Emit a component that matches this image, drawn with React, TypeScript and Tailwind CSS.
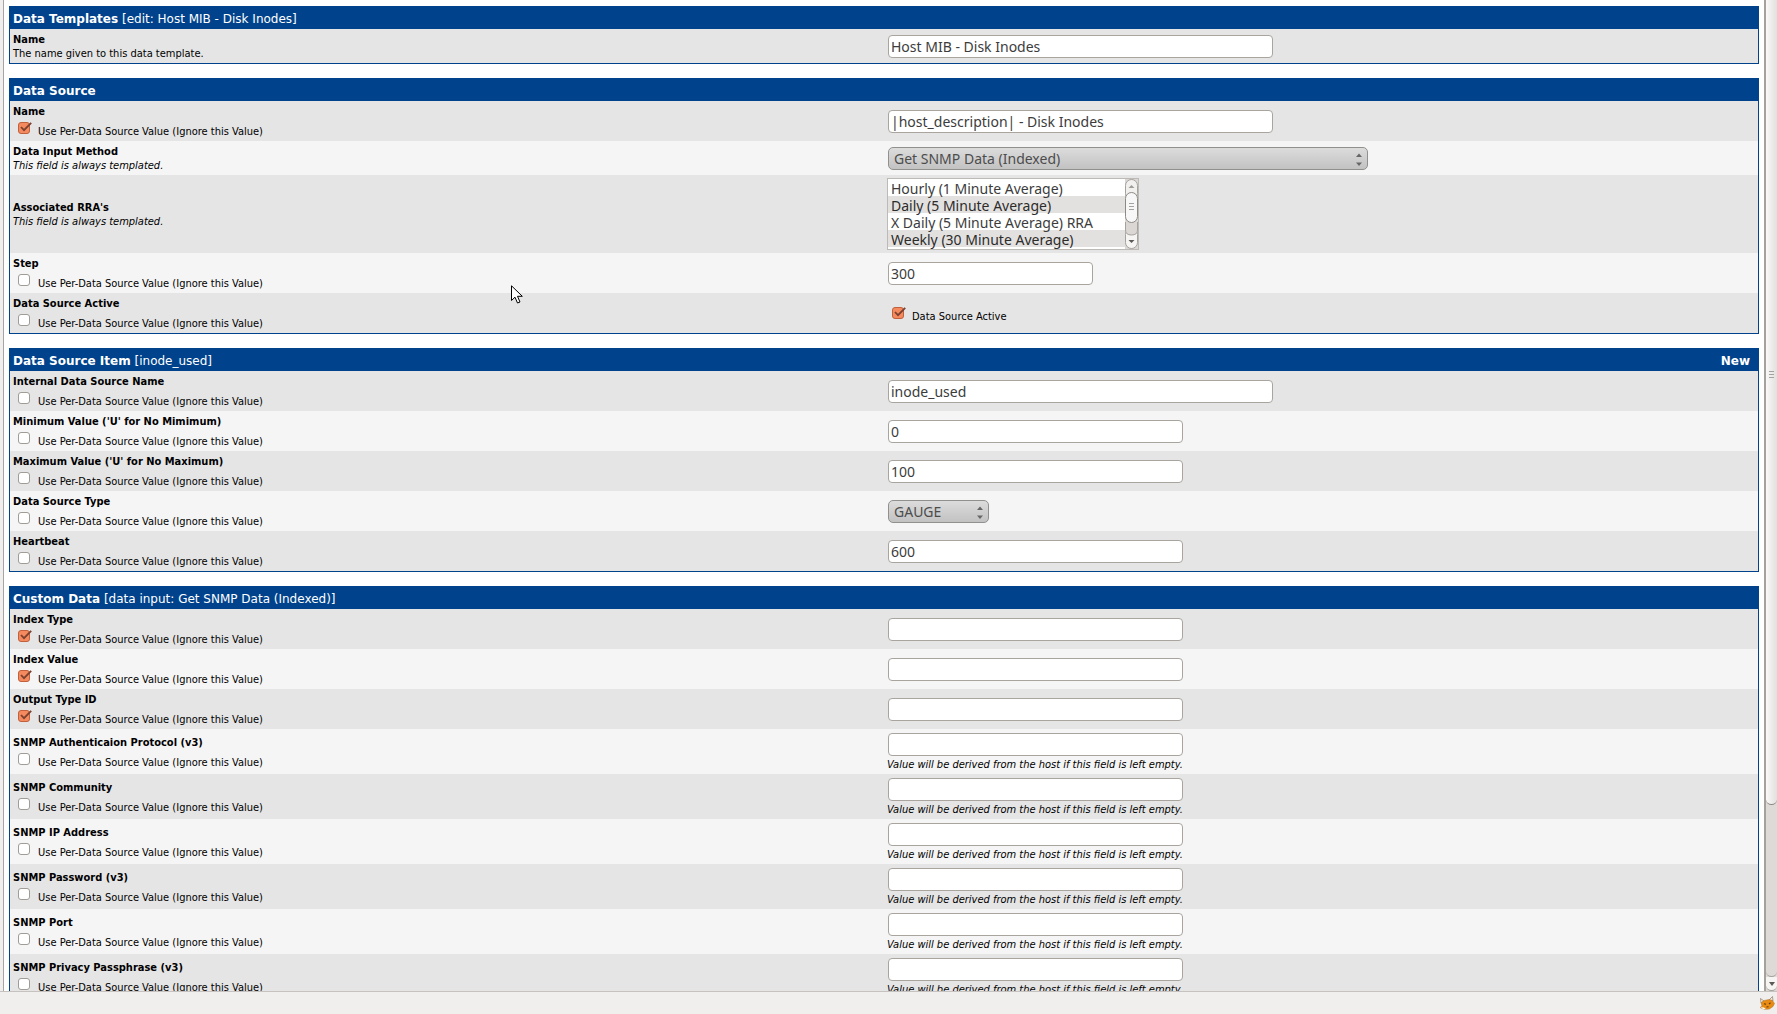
import { useId, type ReactNode } from "react";

const uiFont = "font-['DejaVu_Sans_Condensed','DejaVu_Sans',sans-serif]";
const fieldFont = "font-['Noto_Sans','Open_Sans',sans-serif]";

const widths = {
  sm: "w-[205px]",
  md: "w-[295px]",
  lg: "w-[385px]",
};

interface CheckboxProps {
  id: string;
  checked?: boolean;
}

function Checkbox({ id, checked }: CheckboxProps) {
  return (
    <span className="relative size-3 shrink-0">
      <input
        id={id}
        type="checkbox"
        defaultChecked={checked}
        className="peer block size-3 appearance-none rounded-[3px] border border-[#a09c97] bg-white checked:border-[#c0603c] checked:bg-[#f58a5e]"
      />
      <svg
        viewBox="0 0 14 12"
        className="pointer-events-none absolute top-0 left-0 hidden h-3 w-[14px] peer-checked:block"
        fill="none"
        stroke="#7a4030"
        strokeWidth="1.8"
      >
        <path d="M3 5 L6 8.200 L13.200 0.8" />
      </svg>
    </span>
  );
}

interface RowProps {
  name: string;
  shaded: boolean;
  note?: ReactNode;
  perSource?: boolean;
  hint?: string;
  children: (id: string) => ReactNode;
}

function Row({ name, shaded, note, perSource, hint, children }: RowProps) {
  const id = useId();
  return (
    <div className={`grid grid-cols-2 items-center ${shaded ? "bg-[#e5e5e5]" : "bg-[#f5f5f5]"}`}>
      <div className="px-[3px] pt-1 pb-[2px]">
        <label htmlFor={id} className="block font-bold">
          {name}
        </label>
        {note}
        {perSource !== undefined && (
          <div className="flex gap-2 pt-[3px] pl-[5px]">
            <Checkbox id={`${id}-per`} checked={perSource} />
            <label htmlFor={`${id}-per`} className="pt-[3px]">
              Use Per-Data Source Value (Ignore this Value)
            </label>
          </div>
        )}
      </div>
      <div className="px-[3px] pt-[3px] pb-[2px]">
        {children(id)}
        {hint && <p className="pt-px italic">{hint}</p>}
      </div>
    </div>
  );
}

interface TextFieldProps {
  id: string;
  size: keyof typeof widths;
  value?: string;
}

function TextField({ id, size, value = "" }: TextFieldProps) {
  return (
    <input
      id={id}
      type="text"
      defaultValue={value}
      className={`m-px block h-[23px] rounded-[4px] border border-[#a9a49e] bg-white px-[2px] text-sm text-[#3c3c3c] ${widths[size]} ${fieldFont}`}
    />
  );
}

function Dropdown({ id, value, width }: { id: string; value: string; width: string }) {
  return (
    <div className={`relative m-px ${width}`}>
      <select
        id={id}
        disabled
        className={`block h-[23px] w-full appearance-none rounded-[5px] border border-[#92908d] bg-linear-to-b from-[#dcdcdc] to-[#c2c2c2] pt-px pl-[5px] text-sm text-[#4c4c4c] opacity-100 ${fieldFont}`}
      >
        <option>{value}</option>
      </select>
      <svg viewBox="0 0 6 13" className="pointer-events-none absolute top-[6px] right-[6px] h-[13px] w-[6px]" fill="#666">
        <path d="M0 4 L3 0.5 L6 4 Z M0 9.5 L3 13 L6 9.5 Z" />
      </svg>
    </div>
  );
}

const rras = [
  { label: "Hourly (1 Minute Average)", selected: false },
  { label: "Daily (5 Minute Average)", selected: true },
  { label: "X Daily (5 Minute Average) RRA", selected: false },
  { label: "Weekly (30 Minute Average)", selected: true },
];

function RraList({ id }: { id: string }) {
  return (
    <div className="relative mb-px w-[252px]">
      <select
        id={id}
        multiple
        size={4}
        defaultValue={rras.filter((r) => r.selected).map((r) => r.label)}
        className={`block h-[72px] w-full overflow-hidden border border-[#bdb9b5] bg-white p-0 text-sm leading-[17px] text-[#3c3c3c] [scrollbar-width:none] ${fieldFont}`}
      >
        {rras.map((r) => (
          <option
            key={r.label}
            className="h-[17px] min-h-0 px-[3px] py-0 text-[#3c3c3c] checked:bg-[#e3e1df] checked:text-[#2c2c2c]"
          >
            {r.label}
          </option>
        ))}
      </select>
      <svg viewBox="0 0 13 70" className="absolute top-px right-px h-[70px] w-[13px]" stroke="#a5a19d">
        <rect width="13" height="70" fill="#dad7d5" stroke="none" />
        <rect x="0.5" y="0.5" width="12" height="20" rx="6" fill="#f1f0ef" />
        <rect x="0.5" y="49.5" width="12" height="20" rx="6" fill="#f6f5f4" />
        <path d="M0.5 43 V51 Q0.5 56 6.5 56 Q12.500 56 12.500 51 V43" fill="#dad7d5" />
        <rect x="0.5" y="13.500" width="12" height="30" rx="6" fill="#f8f7f7" stroke="#8d8985" />
        <path d="M4 24.500 H9 M4 27.500 H9 M4 30.500 H9" />
        <path d="M3.500 9 L6.500 6 L9.500 9 Z" fill="#a09c98" stroke="none" />
        <path d="M3.500 61 L6.500 64 L9.500 61 Z" fill="#5c5957" stroke="none" />
      </svg>
    </div>
  );
}

interface PanelProps {
  title: string;
  detail?: string;
  action?: string;
  children: ReactNode;
}

function Panel({ title, detail, action, children }: PanelProps) {
  return (
    <section className="border border-[#00438c]">
      <header className="flex h-[22px] items-center justify-between bg-[#00438c] pt-[2px] pr-2 pl-[3px] font-['DejaVu_Sans',sans-serif] text-xs text-white">
        <h2>
          <strong>{title}</strong> {detail && <span>[{detail}]</span>}
        </h2>
        {action && (
          <a href="#new" className="font-bold">
            {action}
          </a>
        )}
      </header>
      {children}
    </section>
  );
}

const itemFields = [
  { name: "Internal Data Source Name", value: "inode_used", size: "lg" },
  { name: "Minimum Value ('U' for No Mimimum)", value: "0", size: "md" },
  { name: "Maximum Value ('U' for No Maximum)", value: "100", size: "md" },
  { name: "Data Source Type", value: "GAUGE", size: null },
  { name: "Heartbeat", value: "600", size: "md" },
] as const;

const customFields = [
  { name: "Index Type", perSource: true },
  { name: "Index Value", perSource: true },
  { name: "Output Type ID", perSource: true },
  { name: "SNMP Authenticaion Protocol (v3)", perSource: false },
  { name: "SNMP Community", perSource: false },
  { name: "SNMP IP Address", perSource: false },
  { name: "SNMP Password (v3)", perSource: false },
  { name: "SNMP Port", perSource: false },
  { name: "SNMP Privacy Passphrase (v3)", perSource: false },
];

const templated = <p className="italic">This field is always templated.</p>;

function WindowScrollbar() {
  return (
    <div className="flex w-[13px] shrink-0 flex-col border-l-2 border-[#a5a19d] bg-[#dedad8]">
      <div className="flex flex-[748] items-center justify-center rounded-b-full border-b border-[#8d8985] bg-linear-to-r from-[#faf9f9] to-[#e2e0de] pb-14">
        <svg viewBox="0 0 5 7" className="h-[7px] w-[5px]" stroke="#a5a19d">
          <path d="M0 0.5 H5 M0 3.500 H5 M0 6.500 H5" />
        </svg>
      </div>
      <div className="flex-[171] rounded-b-full border-b border-[#a5a19d]" />
      <button
        type="button"
        aria-label="Scroll down"
        className="flex h-[14px] items-center justify-center rounded-b-full border-b border-[#a5a19d] bg-[#f6f5f4]"
      >
        <svg viewBox="0 0 6 4" className="h-1 w-[6px]" fill="#5c5957">
          <path d="M0 0 H6 L3 4 Z" />
        </svg>
      </button>
    </div>
  );
}

export default function App() {
  return (
    <div className={`flex h-screen flex-col bg-[#f1efed] text-[11px] leading-[14px] text-black ${uiFont}`}>
      <div className="flex min-h-0 flex-1 border-b border-[#c5c2bf] pl-[3px]">
        <main className="flex flex-1 flex-col gap-[14px] overflow-y-auto border-l border-[#a5a5a5] bg-white pt-[6px] pr-[5px] pl-[5px] [scrollbar-width:none]">
          <Panel title="Data Templates" detail="edit: Host MIB - Disk Inodes">
            <Row name="Name" shaded note={<p>The name given to this data template.</p>}>
              {(id) => <TextField id={id} size="lg" value="Host MIB - Disk Inodes" />}
            </Row>
          </Panel>

          <Panel title="Data Source">
            <Row name="Name" shaded perSource>
              {(id) => <TextField id={id} size="lg" value="|host_description| - Disk Inodes" />}
            </Row>
            <Row name="Data Input Method" shaded={false} note={templated}>
              {(id) => <Dropdown id={id} value="Get SNMP Data (Indexed)" width="w-[480px]" />}
            </Row>
            <Row name="Associated RRA's" shaded note={templated}>
              {(id) => <RraList id={id} />}
            </Row>
            <Row name="Step" shaded={false} perSource={false}>
              {(id) => <TextField id={id} size="sm" value="300" />}
            </Row>
            <Row name="Data Source Active" shaded perSource={false}>
              {(id) => (
                <div className="flex gap-2 pt-1 pl-[5px]">
                  <Checkbox id={id} checked />
                  <label htmlFor={id} className="pt-[3px]">
                    Data Source Active
                  </label>
                </div>
              )}
            </Row>
          </Panel>

          <Panel title="Data Source Item" detail="inode_used" action="New">
            {itemFields.map((field, i) => (
              <Row key={field.name} name={field.name} shaded={i % 2 === 0} perSource={false}>
                {(id) =>
                  field.size ? (
                    <TextField id={id} size={field.size} value={field.value} />
                  ) : (
                    <Dropdown id={id} value={field.value} width="w-[101px]" />
                  )
                }
              </Row>
            ))}
          </Panel>

          <Panel title="Custom Data" detail="data input: Get SNMP Data (Indexed)">
            {customFields.map((field, i) => (
              <Row
                key={field.name}
                name={field.name}
                shaded={i % 2 === 0}
                perSource={field.perSource}
                hint={field.perSource ? undefined : "Value will be derived from the host if this field is left empty."}
              >
                {(id) => <TextField id={id} size="md" />}
              </Row>
            ))}
          </Panel>
        </main>
        <WindowScrollbar />
      </div>

      <footer className="flex h-[22px] shrink-0 items-center justify-end pr-[2px]">
        <svg viewBox="0 0 16 15" className="h-[15px] w-4">
          <path d="M2 7 L1.500 2.500 L5 5 Z M10 4 L13.500 0.5 L14 5 Z" fill="#f7ead8" stroke="#8a7a68" strokeWidth="0.7" />
          <path d="M2 7 L5 4.500 L10 3.500 L13.500 4.500 L15.500 7.500 L14 10.500 L10.500 13 L5.500 13.500 L1 11.500 L3 10 Z" fill="#e98a12" stroke="#a8763a" strokeWidth="0.5" />
          <path d="M1.500 11.300 L5 11.500 L7 13.300 L4.500 13.300 Z" fill="#fff" />
          <path d="M5 7.800 L7 8.200 M10 8 L11.500 6.800 M7.500 11 L9.500 10.800" stroke="#5a3a10" strokeWidth="1.100" />
        </svg>
      </footer>

      <svg viewBox="0 0 12 19" className="pointer-events-none fixed top-[285px] left-[511px] h-[19px] w-3">
        <path d="M0.5 0.8 V15.500 L4 12.200 L6.500 18 L9 17 L6.500 11.300 H11.300 Z" fill="#fff" stroke="#000" />
      </svg>
    </div>
  );
}
